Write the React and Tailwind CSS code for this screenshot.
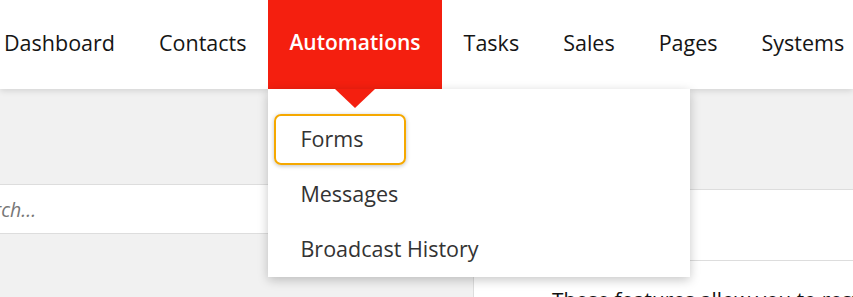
import React from 'react';

const navItems = ['Dashboard', 'Contacts', 'Automations', 'Tasks', 'Sales', 'Pages', 'Systems'];
const menuItems = ['Forms', 'Messages', 'Broadcast History'];

const App = () => {
  return (
    <div
      className="relative w-[853px] h-[297px] overflow-hidden bg-[#f1f1f1]"
      style={{ fontFamily: '"Open Sans", "Liberation Sans", sans-serif' }}
    >
      {/* top navigation */}
      <nav className="relative z-20 flex h-[89px] bg-white shadow-[0_2px_6px_rgba(0,0,0,0.12)]">
        <ul className="flex -ml-[18px]">
          {navItems.map((item) => {
            const active = item === 'Automations';
            return (
              <li
                key={item}
                className={
                  active
                    ? 'relative flex items-center pb-[3px] px-[21px] bg-[#f41f0f] text-white font-semibold text-[21px] whitespace-nowrap'
                    : 'relative flex items-center pb-[3px] px-[22px] text-[#151515] text-[21.5px] whitespace-nowrap'
                }
              >
                {item}
                {active && (
                  <div className="absolute left-0 top-full w-[422px] bg-white pt-[23px] shadow-[0_3px_10px_rgba(0,0,0,0.22)]">
                    {/* arrow */}
                    <div className="absolute top-0 left-[67px] w-0 h-0 border-x-[20px] border-x-transparent border-t-[19px] border-t-[#f41f0f]" />
                    <ul>
                      {menuItems.map((m) => (
                        <li key={m} className="flex items-center h-[55px] px-[6px]">
                          <a
                            className={
                              m === 'Forms'
                                ? 'flex items-center h-[51px] w-[132px] pl-[24px] rounded-[7px] border-2 border-[#f5a800] shadow-[0_1px_4px_rgba(0,0,0,0.25)] text-[#333] font-normal text-[21.5px]'
                                : 'flex items-center h-[51px] pl-[26px] text-[#333] font-normal text-[21.5px]'
                            }
                          >
                            {m}
                          </a>
                        </li>
                      ))}
                    </ul>
                  </div>
                )}
              </li>
            );
          })}
        </ul>
      </nav>

      {/* page body */}
      <div className="flex h-[208px]">
        {/* left column */}
        <div className="w-[473px] shrink-0 pt-[95px]">
          <div className="flex items-center h-[50px] pt-[2px] bg-white border-y border-[#dddddd] overflow-hidden">
            <span className="-ml-[37px] italic text-[19.5px] text-[#777]">Search...</span>
          </div>
        </div>

        {/* right column */}
        <div className="flex-1 flex flex-col">
          <div className="h-[101px] border-b border-[#dddddd]" />
          <div className="h-[71px] bg-white border-b border-[#dddddd]" />
          <div className="flex-1 bg-white border-l border-[#dddddd] pl-[78px] pt-[23px] overflow-hidden">
            <p className="whitespace-nowrap text-[20.7px] text-[#111]">
              These features allow you to restrict access
            </p>
          </div>
        </div>
      </div>
    </div>
  );
};

export default App;
